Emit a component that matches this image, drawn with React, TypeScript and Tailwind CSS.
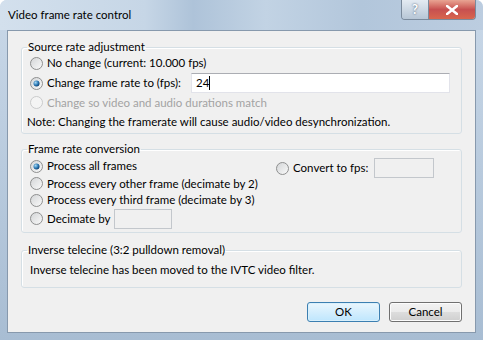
import React from "react";

function Radio({ checked = false, disabled = false }: { checked?: boolean; disabled?: boolean }) {
  return (
    <svg width="13" height="13" viewBox="0 0 13 13" className="shrink-0">
      <defs>
        <linearGradient id="rfill" x1="0" y1="0" x2="1" y2="1">
          <stop offset="0" stopColor="#d2d4d6" />
          <stop offset="1" stopColor="#fbfbfb" />
        </linearGradient>
        <radialGradient id="rdot" cx="0.35" cy="0.35" r="0.7">
          <stop offset="0" stopColor="#a8d8f3" />
          <stop offset="0.6" stopColor="#2b79b5" />
          <stop offset="1" stopColor="#0f3d6c" />
        </radialGradient>
      </defs>
      <circle
        cx="6.5"
        cy="6.5"
        r="6"
        fill={disabled ? "#f4f4f4" : "url(#rfill)"}
        stroke={disabled ? "#c9cacb" : "#8e8f8f"}
      />
      {checked && <circle cx="6.5" cy="6.5" r="3" fill="url(#rdot)" />}
    </svg>
  );
}

function Option({
  label,
  checked,
  disabled,
  className = "",
}: {
  label: string;
  checked?: boolean;
  disabled?: boolean;
  className?: string;
}) {
  return (
    <div className={`flex items-center gap-[4px] whitespace-nowrap ${className}`}>
      <Radio checked={checked} disabled={disabled} />
      <span className={disabled ? "text-[#a3a3a3]" : "text-black"}>{label}</span>
    </div>
  );
}

function Group({ title, className = "", children }: { title: string; className?: string; children: React.ReactNode }) {
  return (
    <fieldset className={`border border-[#d5dfe5] rounded-[3px] shadow-[inset_1px_1px_0_#ffffff] ${className}`}>
      <legend className="ml-[5px] px-[1px] leading-[16px] whitespace-nowrap">{title}</legend>
      {children}
    </fieldset>
  );
}

export default function App() {
  return (
    <div className="w-[483px] h-[340px] overflow-hidden rounded-t-[7px] bg-gradient-to-b from-[#c9d8e8] to-[#a8bdd3] font-['Lato',sans-serif] text-[11.5px] text-black flex flex-col">
      {/* Title bar */}
      <div className="h-[30px] shrink-0 flex items-start justify-between bg-[linear-gradient(90deg,#d3e0ed_0%,#c6d6e6_30%,#aec3d9_40%,#c2d3e4_55%,#b2c6db_75%,#bccde0_100%)]">
        <div className="pl-[8px] pt-[7px] leading-[16px] text-black">Video frame rate control</div>
        <div className="flex mr-[7px] rounded-b-[4px] overflow-hidden border border-t-0 border-[#7a8a9c] h-[20px]">
          <div className="w-[27px] flex items-center justify-center bg-gradient-to-b from-[#e4ebf2] to-[#b7c6d6] border-r border-[#7a8a9c] text-white font-bold text-[13px] [text-shadow:0_0_2px_#3b4f66]">
            ?
          </div>
          <div className="w-[46px] flex items-center justify-center bg-gradient-to-b from-[#e8a493] via-[#c75050] to-[#d8664e]">
            <svg width="12" height="10" viewBox="0 0 12 10">
              <path d="M1 1 L11 9 M11 1 L1 9" stroke="#ffffff" strokeWidth="2.6" strokeLinecap="square" />
            </svg>
          </div>
        </div>
      </div>

      {/* Client area */}
      <div className="mx-[7px] h-[303px] border border-[#8799ad] bg-[#f0f0f0] px-[13px] pt-[8px] flex flex-col">
        <Group title="Source rate adjustment">
          <div className="pl-[8px] pr-[11px] pb-[2px]">
            <div className="h-[20px] flex items-center mt-[-2px]">
              <Option label="No change (current: 10.000 fps)" />
            </div>
            <div className="h-[20px] flex items-center">
              <Option label="Change frame rate to (fps):" checked className="w-[160px]" />
              <div className="flex-1 h-[20px] ml-[1px] bg-white border border-[#e2e3ea] border-t-[#abadb3] flex items-center pl-[4px]">
                <span>24</span>
                <span className="w-px h-[14px] bg-black" />
              </div>
            </div>
            <div className="h-[19px] flex items-center">
              <Option label="Change so video and audio durations match" disabled />
            </div>
            <div className="h-[19px] flex items-center -ml-[3px] whitespace-nowrap">
              Note: Changing the framerate will cause audio/video desynchronization.
            </div>
          </div>
        </Group>

        <Group title="Frame rate conversion" className="mt-[7px]">
          <div className="flex pl-[8px] pr-[11px] pb-[3px]">
            <div className="w-[246px] flex flex-col">
              <div className="h-[18px] flex items-center">
                <Option label="Process all frames" checked />
              </div>
              <div className="h-[17px] flex items-center">
                <Option label="Process every other frame (decimate by 2)" />
              </div>
              <div className="h-[16px] flex items-center">
                <Option label="Process every third frame (decimate by 3)" />
              </div>
              <div className="h-[21px] flex items-center">
                <Option label="Decimate by" className="w-[84px]" />
                <div className="w-[58px] h-[20px] border border-[#c3c7cc] bg-[#f0f0f0]" />
              </div>
            </div>
            <div className="flex items-start pt-[1px]">
              <div className="h-[20px] flex items-center">
                <Option label="Convert to fps:" className="w-[98px]" />
                <div className="w-[60px] h-[20px] border border-[#c3c7cc] bg-[#f0f0f0]" />
              </div>
            </div>
          </div>
        </Group>

        <Group title="Inverse telecine (3:2 pulldown removal)" className="mt-[9px]">
          <div className="h-[22px] flex items-center pt-[2px] pl-[8px] mb-[7px] whitespace-nowrap">
            Inverse telecine has been moved to the IVTC video filter.
          </div>
        </Group>

        <div className="flex justify-end gap-[9px] mt-[14px]">
          <button className="w-[73px] h-[20px] rounded-[3px] border border-[#3c7fb1] bg-gradient-to-b from-[#eaf6fd] to-[#bee6fd] shadow-[inset_0_0_0_1px_#d9f0fc] leading-[18px]">
            OK
          </button>
          <button className="w-[73px] h-[20px] rounded-[3px] border border-[#707070] bg-[linear-gradient(180deg,#f2f2f2_0%,#ebebeb_50%,#dddddd_51%,#cfcfcf_100%)] shadow-[inset_0_0_0_1px_#fcfcfc] leading-[18px]">
            Cancel
          </button>
        </div>
      </div>
    </div>
  );
}
